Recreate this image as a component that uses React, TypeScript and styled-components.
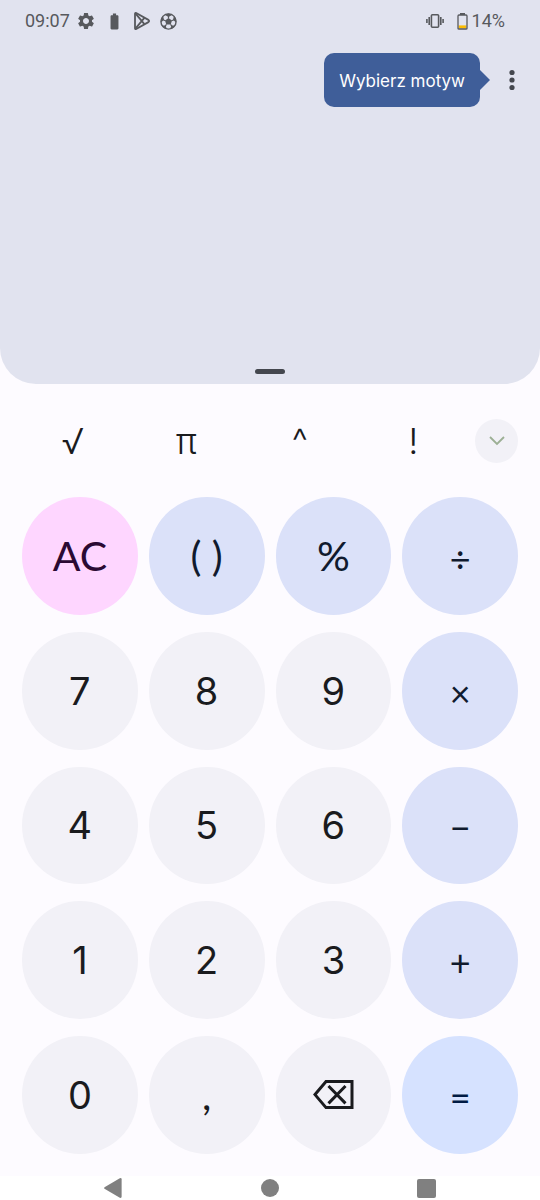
import React from "react";
import styled, { createGlobalStyle, css } from "styled-components";
import { MdBatteryFull, MdSettings } from "react-icons/md";

const GlobalStyle = createGlobalStyle`
  *, *::before, *::after { box-sizing: border-box; }
  body { margin: 0; background: #fdfbff; font-family: Inter, "Liberation Sans", sans-serif; }
  button { margin: 0; padding: 0; border: 0; background: none; font: inherit; color: inherit; cursor: pointer; }
  svg { display: block; }
`;

const Screen = styled.div`
  display: flex;
  flex-direction: column;
  min-height: 100vh;
`;

const Display = styled.header`
  display: flex;
  flex-direction: column;
  min-height: 384px;
  border-radius: 0 0 36px 36px;
  background: #e1e3ef;
`;

const StatusBar = styled.div`
  display: flex;
  justify-content: space-between;
  align-items: center;
  height: 42px;
  padding: 0 35px 0 25px;
  font: 400 18px/20px Roboto, sans-serif;
  color: #57595d;
`;

const StatusGroup = styled.div<{ $gap: number }>`
  display: flex;
  align-items: center;
  gap: ${(p) => p.$gap}px;
`;

const BatteryLevel = styled.span`
  display: flex;
  align-items: center;
  gap: 4px;
`;

const Toolbar = styled.div`
  display: flex;
  justify-content: flex-end;
  align-items: center;
  gap: 10px;
  padding: 11px 16px 0 0;
`;

const Tooltip = styled.div`
  display: flex;
  align-items: center;
`;

const TooltipBody = styled.div`
  padding: 17px 15px 15px;
  border-radius: 10px;
  background: #3f5e99;
  color: #fff;
  font-size: 17px;
  line-height: 22px;
  white-space: nowrap;
`;

const MenuButton = styled.button`
  display: grid;
  place-items: center;
  width: 24px;
  height: 40px;
`;

const DragHandle = styled.div`
  align-self: center;
  width: 30px;
  height: 5px;
  margin: auto 0 10px;
  border-radius: 3px;
  background: #44474e;
`;

const FunctionRow = styled.div`
  display: flex;
  align-items: center;
  height: 113px;
  padding: 0 22px 0 16px;
`;

const FunctionKey = styled.button`
  flex: 1;
  height: 60px;
  font-size: 36px;
  font-weight: 350;
  line-height: 40px;
  color: #1a1b1e;
`;

const ExpandButton = styled.button`
  display: grid;
  place-items: center;
  width: 43px;
  height: 44px;
  margin-left: 5px;
  border-radius: 50%;
  background: #f2f1f7;
`;

const Keypad = styled.main`
  flex: 1;
  display: grid;
  grid-template-columns: repeat(4, 1fr);
  grid-auto-rows: minmax(64px, 1fr);
  gap: 17px 11px;
  padding: 0 22px 22px;
`;

type Tone = "digit" | "separator" | "symbol" | "operator" | "clear" | "equals";

const lettering = css`font-family: Lato, sans-serif; font-size: 41px;`;
const arithmetic = css`font-family: Lato, sans-serif; font-size: 36px; padding-top: 4px;`;

const tones = {
  digit: css`background: #f2f1f7; color: #1a1b1e; font-size: 38px;`,
  separator: css`background: #f2f1f7; color: #1a1b1e; ${lettering}`,
  symbol: css`background: #dbe1f9; color: #101a2e; ${lettering}`,
  operator: css`background: #dbe1f9; color: #101a2e; ${arithmetic}`,
  clear: css`background: #fed6ff; color: #2b0a33; ${lettering}`,
  equals: css`background: #d6e2ff; color: #001a43; ${arithmetic}`,
};

const Key = styled.button<{ $tone: Tone }>`
  display: grid;
  place-items: center;
  border-radius: 50%;
  font-weight: 400;
  line-height: 48px;
  ${(p) => tones[p.$tone]}
`;

const NavBar = styled.nav`
  display: flex;
  justify-content: space-between;
  align-items: center;
  height: 24px;
  padding: 0 104px;
  background: #fff;
`;

const PlayIcon = () => (
  <svg width="18" height="20" viewBox="0 0 18 20" fill="none" stroke="#57595d" strokeWidth="1.8" strokeLinejoin="round">
    <path d="M2 2.8Q2 1.4 3.2 2L15.4 8.9Q16.8 10 15.4 11.1L3.2 18Q2 18.6 2 17.2Z" />
    <path d="M2.4 2.4L11.4 13.2M2.4 17.6L11.4 6.8" />
  </svg>
);

const BallIcon = () => (
  <svg width="17" height="17" viewBox="0 0 17 17" fill="#57595d" stroke="#57595d">
    <circle cx="8.5" cy="8.5" r="7.6" fill="none" strokeWidth="1.4" />
    <path stroke="none" d="M8.5 5L12 7.5L10.7 11.6H6.3L5 7.5ZM4.6 1.8L8.5 4L12.4 1.8L8.5 .6ZM1 9.6L4 6.8L3 2.8L.9 6ZM16 9.6L13 6.8L14 2.8L16.1 6ZM1.8 12.4L5.6 12.6L6.8 16L4 15.2ZM15.2 12.4L11.4 12.6L10.2 16L13 15.2Z" />
    <path fill="none" strokeWidth="1.2" d="M8.5 5.4V2.8M11.6 7.7L14 6.8M10.5 11.3L12.2 13.6M6.5 11.3L4.8 13.6M5.4 7.7L3 6.8" />
  </svg>
);

const VibrateIcon = () => (
  <svg width="18" height="16" viewBox="0 0 18 16" fill="none" stroke="#57595d" strokeWidth="1.6">
    <rect x="5.4" y="1.8" width="7.2" height="12.4" rx="1" />
    <path d="M3.2 4v8M14.8 4v8M.9 6v4M17.1 6v4" />
  </svg>
);

const LowBatteryIcon = () => (
  <svg width="11" height="17" viewBox="0 0 11 17">
    <path d="M3 0h5v2h-5z" fill="#57595d" />
    <path d="M1.6 12.4h7.8v3h-7.8z" fill="#fbbc04" />
    <path d="M1 15.4V3Q1 2 2 2H9Q10 2 10 3V15.4Q10 16 9 16H2Q1 16 1 15.4Z" fill="none" stroke="#57595d" strokeWidth="1.3" />
  </svg>
);

const BackspaceIcon = () => (
  <svg width="42" height="30" viewBox="0 0 42 30" fill="none" stroke="currentColor" strokeWidth="3">
    <path d="M14 1.6H40V27.6H14L3 14.6Z" />
    <path d="M16.5 6L33.5 23.4M33.5 6L16.5 23.4" />
  </svg>
);

const keys: { label: React.ReactNode; tone: Tone; name?: string }[] = [
  { label: "AC", tone: "clear" },
  { label: "( )", tone: "symbol" },
  { label: "%", tone: "symbol" },
  { label: "÷", tone: "operator" },
  { label: "7", tone: "digit" },
  { label: "8", tone: "digit" },
  { label: "9", tone: "digit" },
  { label: "×", tone: "operator" },
  { label: "4", tone: "digit" },
  { label: "5", tone: "digit" },
  { label: "6", tone: "digit" },
  { label: "−", tone: "operator" },
  { label: "1", tone: "digit" },
  { label: "2", tone: "digit" },
  { label: "3", tone: "digit" },
  { label: "+", tone: "operator" },
  { label: "0", tone: "digit" },
  { label: ",", tone: "separator" },
  { label: <BackspaceIcon />, tone: "digit", name: "Usuń" },
  { label: "=", tone: "equals" },
];

export default function App() {
  return (
    <>
      <GlobalStyle />
      <Screen>
        <Display>
          <StatusBar>
            <StatusGroup $gap={6}>
              <span>09:07</span>
              <StatusGroup $gap={9}>
                <MdSettings size={20} />
                <MdBatteryFull size={19} />
                <PlayIcon />
                <BallIcon />
              </StatusGroup>
            </StatusGroup>
            <StatusGroup $gap={13}>
              <VibrateIcon />
              <BatteryLevel>
                <LowBatteryIcon />
                14%
              </BatteryLevel>
            </StatusGroup>
          </StatusBar>
          <Toolbar>
            <Tooltip role="tooltip">
              <TooltipBody>Wybierz motyw</TooltipBody>
              <svg width="10" height="20" viewBox="0 0 10 20" fill="#3f5e99">
                <path d="M0 0L10 10L0 20Z" />
              </svg>
            </Tooltip>
            <MenuButton aria-label="Więcej opcji">
              <svg width="6" height="22" viewBox="0 0 6 22" fill="#44474e">
                <circle cx="3" cy="3.5" r="2.6" />
                <circle cx="3" cy="11" r="2.6" />
                <circle cx="3" cy="18.5" r="2.6" />
              </svg>
            </MenuButton>
          </Toolbar>
          <DragHandle />
        </Display>
        <FunctionRow>
          {["√", "π", "^", "!"].map((f) => (
            <FunctionKey key={f}>{f}</FunctionKey>
          ))}
          <ExpandButton aria-label="Rozwiń">
            <svg width="16" height="10" viewBox="0 0 16 10" fill="none" stroke="#9caf94" strokeWidth="1.8">
              <path d="M1 1L8 8L15 1" />
            </svg>
          </ExpandButton>
        </FunctionRow>
        <Keypad>
          {keys.map((k, i) => (
            <Key key={i} $tone={k.tone} aria-label={k.name}>
              {k.label}
            </Key>
          ))}
        </Keypad>
        <NavBar>
          <button aria-label="Wstecz">
            <svg width="18" height="20" viewBox="0 0 18 20" fill="#808080">
              <path d="M.5 9.2Q-.2 10 .5 10.8L15.8 19.8Q17.6 20.4 17.6 18.8V1.2Q17.6 -.4 15.8.2Z" />
            </svg>
          </button>
          <button aria-label="Ekran główny">
            <svg width="18" height="18" viewBox="0 0 18 18" fill="#808080">
              <circle cx="9" cy="9" r="9" />
            </svg>
          </button>
          <button aria-label="Ostatnie">
            <svg width="19" height="19" viewBox="0 0 19 19" fill="#808080">
              <rect width="19" height="19" rx="2" />
            </svg>
          </button>
        </NavBar>
      </Screen>
    </>
  );
}
